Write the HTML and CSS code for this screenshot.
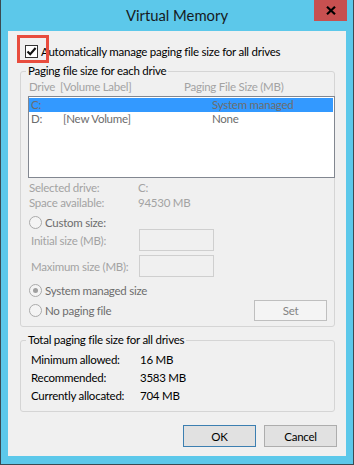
FILE: index.html
```html
<!DOCTYPE html>
<html>
<head>
<meta charset="utf-8">
<title>Virtual Memory</title>
<link rel="stylesheet" href="styles.css">
</head>
<body>
<div class="window">
  <div class="titlebar">
    <span class="title">Virtual Memory</span>
    <button class="close" aria-label="Close">
      <svg width="10" height="9" viewBox="0 0 10 9"><path d="M1 0.8 L9 8.2 M9 0.8 L1 8.2" stroke="#000" stroke-width="2.2" fill="none"/></svg>
    </button>
  </div>
  <div class="client">
    <div class="auto-row">
      <span class="checkbox"><svg width="11" height="11" viewBox="0 0 11 11"><path d="M1.5 5.5 L4.2 8.3 L9.6 2" stroke="#111" stroke-width="2.1" fill="none"/></svg></span>
      <span class="auto-label">Automatically manage paging file size for all drives</span>
    </div>
    <span class="highlight"></span>

    <div class="group group-drives">
      <div class="group-title">Paging file size for each drive</div>
      <div class="list-header"><span class="h-drive">Drive</span><span class="h-label">[Volume Label]</span><span>Paging File Size (MB)</span></div>
      <div class="listbox">
        <div class="row selected"><span class="c1">C:</span><span class="c2"></span><span>System managed</span></div>
        <div class="row"><span class="c1">D:</span><span class="c2">[New Volume]</span><span>None</span></div>
      </div>
      <div class="info">
        <div class="info-line"><span class="info-label">Selected drive:</span><span>C:</span></div>
        <div class="info-line"><span class="info-label">Space available:</span><span>94530 MB</span></div>
      </div>
      <div class="radio-row custom"><span class="radio"></span><span>Custom size:</span></div>
      <div class="size-row initial"><span class="size-label">Initial size (MB):</span><span class="input"></span></div>
      <div class="size-row maximum"><span class="size-label">Maximum size (MB):</span><span class="input"></span></div>
      <div class="radio-row system"><span class="radio on"></span><span>System managed size</span></div>
      <div class="nopage-row">
        <span class="radio"></span><span class="nopage-label">No paging file</span>
        <button class="set">Set</button>
      </div>
    </div>

    <div class="group group-total">
      <div class="group-title">Total paging file size for all drives</div>
      <div class="totals">
        <div class="total-line"><span class="total-label">Minimum allowed:</span><span>16 MB</span></div>
        <div class="total-line"><span class="total-label">Recommended:</span><span>3583 MB</span></div>
        <div class="total-line"><span class="total-label">Currently allocated:</span><span>704 MB</span></div>
      </div>
    </div>

    <div class="buttons">
      <button class="btn default">OK</button>
      <button class="btn">Cancel</button>
    </div>
  </div>
</div>
</body>
</html>
```

FILE: styles.css
```css
* { box-sizing: border-box; }
html, body { margin: 0; padding: 0; }
body {
  width: 354px;
  height: 465px;
  overflow: hidden;
  background: #5cc8ea;
  font-family: Lato, "Liberation Sans", sans-serif;
  font-size: 11.5px;
  letter-spacing: -0.25px;
  color: #000;
}
.window {
  width: 354px;
  height: 465px;
  background: #5cc8ea;
  border: 1px solid #3a4a52;
  border-top: none;
  display: flex;
  flex-direction: column;
  position: relative;
}
.titlebar {
  height: 31px;
  flex: none;
  display: flex;
  align-items: center;
  justify-content: center;
}
.title {
  font-family: Lato, "Liberation Sans", sans-serif;
  font-size: 14.8px;
  letter-spacing: 0;
  color: #161a22;
  margin-top: -1px;
}
.close {
  position: absolute;
  top: 0;
  right: 6px;
  width: 33px;
  height: 21px;
  padding: 0;
  border: none;
  background: #c75050;
  display: flex;
  align-items: center;
  justify-content: center;
}
.client {
  position: relative;
  margin-left: 7px;
  width: 338px;
  height: 425px;
  background: #f0f0f0;
}
.auto-row {
  display: flex;
  align-items: center;
  gap: 3px;
  height: 13px;
  margin: 14px 0 0 17px;
}
.checkbox {
  width: 13px;
  height: 13px;
  border: 1px solid #333;
  background: #fff;
  display: flex;
  align-items: center;
  justify-content: center;
  flex: none;
}
.highlight {
  position: absolute;
  left: 9px;
  top: 4px;
  width: 32px;
  height: 28px;
  border: 3px solid #e84c3d;
}
.group {
  margin: 13px 0 0 12px;
  width: 315px;
  border: 1px solid #d5d5d5;
  border-radius: 3px;
}
.group-title {
  margin: -9px 0 0 5px;
  padding: 0 2px;
  line-height: 16px;
  background: #f0f0f0;
  width: fit-content;
}
.group-drives { padding-bottom: 5px; }
.list-header {
  display: flex;
  line-height: 16px;
  padding-left: 8px;
  color: #a3a3a3;
}
.h-drive { width: 31px; }
.h-label { width: 124px; }
.listbox {
  margin: 1px -1px 0 7px;
  height: 82px;
  border: 1px solid #828790;
  background: #fff;
  padding: 1px 1px 0 0;
}
.row {
  display: flex;
  height: 14px;
  line-height: 14px;
  padding-left: 2px;
  color: #6d6d6d;
}
.row.selected { background: #3399ff; }
.c1 { width: 32px; }
.c2 { width: 149px; }
.info {
  margin-top: 2px;
  padding-left: 8px;
  line-height: 15px;
  color: #a3a3a3;
}
.info-line { display: flex; }
.info-label { width: 109px; }
.radio-row {
  display: flex;
  align-items: center;
  gap: 3px;
  height: 15px;
  margin-left: 8px;
  color: #6d6d6d;
}
.custom { margin-top: 5px; }
.system { margin-top: 6px; }
.radio {
  width: 13px;
  height: 13px;
  flex: none;
  border-radius: 50%;
  border: 1px solid #aaa;
  background: #f4f4f4;
  display: flex;
  align-items: center;
  justify-content: center;
}
.radio.on::after {
  content: "";
  width: 5px;
  height: 5px;
  border-radius: 50%;
  background: #a0a0a0;
}
.size-row {
  display: flex;
  align-items: center;
  padding-left: 10px;
  color: #a3a3a3;
}
.initial { margin-top: -1px; }
.maximum { margin-top: 4px; }
.size-label { width: 108px; }
.input {
  width: 75px;
  height: 22px;
  border: 1px solid #cfcfcf;
  background: #f0f0f0;
}
.nopage-row {
  display: flex;
  align-items: center;
  height: 21px;
  margin: 2px 7px 0 8px;
  color: #6d6d6d;
}
.nopage-label { margin-left: 3px; }
.set {
  margin-left: auto;
  width: 73px;
  height: 21px;
  border: 1px solid #bfbfbf;
  background: #f4f4f4;
  color: #838383;
  font: inherit;
  letter-spacing: inherit;
  padding: 0;
}
.group-total { padding-bottom: 6px; }
.totals {
  margin-top: 3px;
  padding-left: 10px;
  line-height: 18px;
}
.total-line { display: flex; }
.total-label { width: 109px; }
.buttons {
  display: flex;
  justify-content: flex-end;
  gap: 8px;
  margin-top: 13px;
  padding-right: 9px;
}
.btn {
  width: 73px;
  height: 22px;
  border: 1px solid #adadad;
  background: #e1e1e1;
  font: inherit;
  letter-spacing: inherit;
  color: #000;
  padding: 0;
}
.btn.default { border-color: #3c7fb1; }
```
